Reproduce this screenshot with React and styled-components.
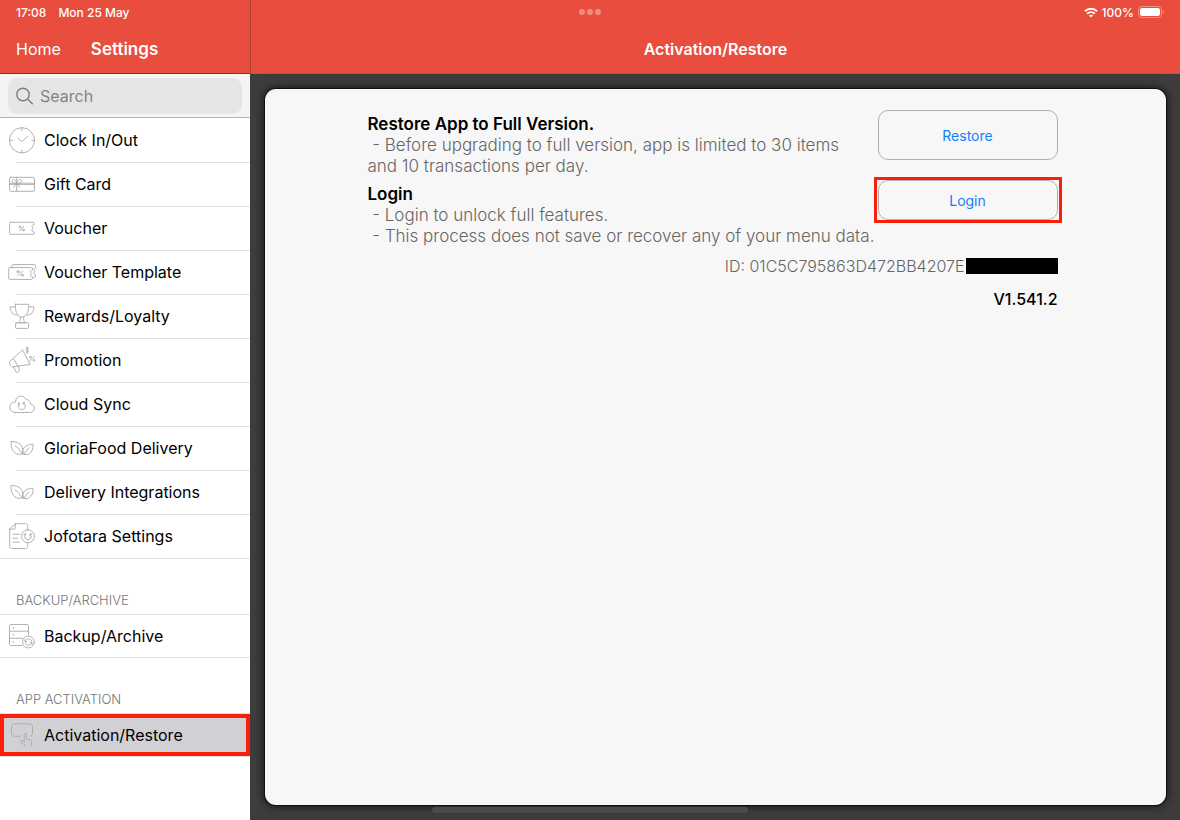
import React from "react";
import styled, { createGlobalStyle } from "styled-components";

const GlobalStyle = createGlobalStyle`
  * {
    box-sizing: border-box;
  }

  body {
    margin: 0;
    font-family: Inter, "Liberation Sans", sans-serif;
    font-size: 16px;
    color: #000;
    background: #3d3d3d;
  }

  button, input {
    font-family: inherit;
  }
`;

// Icons
const LineIcon = styled.svg`
  width: 28px;
  height: 28px;
  flex: none;
  fill: none;
  stroke: #a9a9a9;
  stroke-width: 0.9;
  stroke-linecap: round;
  stroke-linejoin: round;
`;

const Icon = ({ children }) => (
  <LineIcon viewBox="0 0 28 28" aria-hidden="true">
    {children}
  </LineIcon>
);

const ClockIcon = () => (
  <Icon>
    <circle cx="14" cy="14.3" r="12.6" />
    <path d="M14 1.7v3M14 24v3M1.4 14.3h3M23.6 14.3h3M9.8 12.2l4 3.4 6-5.3" />
  </Icon>
);

const GiftCardIcon = () => (
  <Icon>
    <rect x="1.5" y="7.3" width="25" height="14" rx="1.5" />
    <path d="M1.5 13.2h25M1.5 14.4h25M8.7 7.3v14M8.7 13.4c-1.2-4.8-4.9-5-4.6-2 .3 2 2.600 2.200 4.600 2zM8.700 13.400c1.200-4.800 4.900-5 4.600-2-.3 2-2.600 2.200-4.600 2zM8.500 13.800l-2.700 3.400M9 13.800l2.700 3.400" />
  </Icon>
);

const VoucherIcon = () => (
  <Icon>
    <path d="M2.8 8.300h22.600c.5 0 .8.3.8.8v1.400c-2 .5-2.700 1.600-2 2.600l1 1.200-1 1.300c-.7 1 0 2.100 2 2.600v1.300c0 .5-.3.8-.8.8H2.800c-.7 0-1.200-.4-1.200-1v-10c0-.6.5-1 1.200-1z" />
    <path d="M15.800 12.300l-4.200 4.400" />
    <circle cx="11.900" cy="13" r="0.900" />
    <circle cx="15.400" cy="16" r="0.900" />
  </Icon>
);

const VoucherTemplateIcon = () => (
  <Icon>
    <path d="M1.700 9.600h22c.5 0 .8.3.8.8v1.500c-2 .4-2.600 1.500-1.900 2.500l.7 1.200-.7 1.200c-.6 1 0 2 1.900 2.400v1.400c0 .5-.3.8-.8.8h-22c-.6 0-1-.4-1-1V10.600c0-.6.4-1 1-1z" />
    <path d="M4 9.500V7.600c0-.6.4-1 1-1h21.500c.6 0 1 .4 1 1v2.300c-1.400.4-2 1.400-1.500 2.300l.7 1.200-.7 1.200c-.5.9.1 1.900 1.500 2.300v1.300c0 .6-.4 1-1 1h-2" />
    <path d="M14.700 12.900l-5 5" />
    <circle cx="10" cy="13.700" r="1.100" />
    <circle cx="14.300" cy="17.200" r="1.100" />
  </Icon>
);

const TrophyIcon = () => (
  <Icon>
    <path d="M7.300 2.300h13.400c.2 6.200-1.200 11.700-6.700 13-5.500-1.300-6.900-6.800-6.700-13zM7.300 4.900H2c.2 4.800 2.600 8.600 7.300 8.200M20.700 4.900H26c-.2 4.800-2.600 8.600-7.300 8.200M12.300 15c.3 2.500 0 4.200-1.600 5.800h6.600c-1.600-1.600-1.900-3.300-1.600-5.800" />
    <rect x="7.500" y="20.800" width="13" height="5.600" rx="0.800" />
  </Icon>
);

const PromotionIcon = () => (
  <Icon>
    <path d="M14.700 4.200l7.500 14.300-12.300 1.600-4.300-7.500zM5.600 12.600l-3.200 2c-1.700 1.600-.8 5.600 2 6.500l5.500-1M5.800 20.900l1.800 4.500c.7 1.600 4.200.6 3.800-1.300l-1-4" />
    <path d="M20.600 2.500c-1-1.200-2.900-.6-2.700.6.2 1.300 2.700.8 2.800 2.200.1 1.200-2 1.600-2.900.4M19.200 1v6.500M26.400 10.300l-4.500 4.600" />
    <circle cx="22.300" cy="11.200" r="0.900" />
    <circle cx="25.800" cy="14.300" r="0.900" />
  </Icon>
);

const CloudIcon = () => (
  <Icon>
    <path d="M7 22.500h14.500c6.200 0 6.700-7.400.9-8.300 0-3.600-2.200-4.800-4.400-4.500C15.900 4 7.500 5.200 7.500 12 .3 11.700-.4 21.900 7 22.500z" />
    <path d="M11.200 13.500a3.600 3.600 0 1 0 4.200-.7M11.600 15v-1.900H9.900M15 14.500v-1.900h1.700" />
  </Icon>
);

const LeavesIcon = () => (
  <Icon>
    <path d="M14.300 19.700c2-6-1.300-12.300-11.300-12.200C2.600 15.700 6.300 21.200 13 20.300M7 11.700c3 2 5.500 4.700 7.300 8.600" />
    <path d="M16 20.400c-3-3.800-.8-9.800 9-10.200.5 7-3.200 11.800-9 10.200zM21 13.800c-2 1.700-3.700 4.200-5 6.600" />
  </Icon>
);

const DocumentIcon = () => (
  <Icon>
    <path d="M19.700 8.300V3.700c0-1.200-.7-2-2-2H7.300L1.700 7v17.500c0 1.200.7 2 2 2h14c1.300 0 2-.8 2-2v-3.300M7.300 1.700v4c0 1-.5 1.400-1.400 1.400H1.700M5 12.200h6.500M5 16.200h5M5 20.200h6.500" />
    <circle cx="20" cy="14.300" r="6.500" />
    <path d="M17.600 12.200a3.300 3.300 0 1 0 4.700 0M17.400 11.200v1.500h-1.500M22 14v-2h1.500" />
  </Icon>
);

const BackupIcon = () => (
  <Icon>
    <path d="M20.500 13V4c0-1-.5-1.500-1.500-1.500H3c-1 0-1.500.5-1.500 1.500v18c0 1 .5 1.500 1.500 1.500h11M1.500 9.200h19M1.500 16.300h13" />
    <path d="M5.300 5.900h.1M5.300 12.800h.1M5.300 20h.1" strokeWidth="1.5" />
    <circle cx="20.5" cy="20" r="5.9" />
    <path d="M17.200 19.400c.7-3 5-3.700 6.500-.7M17 17.700v2h1.800M23.800 20.600c-.7 3-5 3.700-6.500.7M24 22.300v-2h-1.800" />
  </Icon>
);

const ActivationIcon = () => (
  <Icon>
    <path d="M12.700 15.200H6.500c-1.800 0-3-1.200-3-3V5.800c0-1.800 1.200-3 3-3h15c1.800 0 3 1.200 3 3v6.400c0 1.500-.8 2.500-2 2.900" />
    <path d="M17.300 24.800l-4.500-4c-.7-1 .5-2 1.500-1.300l2 1.500v-7.600c0-1.500 2.200-1.500 2.200 0v4.700l3.500.7c1 .2 1.600.8 1.600 1.900v4.200" />
  </Icon>
);

const SearchIcon = styled.svg`
  width: 18px;
  height: 18px;
  flex: none;
  fill: none;
  stroke: #7d7d80;
  stroke-width: 1.4;
  stroke-linecap: round;
`;

// Menu data
const menuItems = [
  { label: "Clock In/Out", icon: ClockIcon },
  { label: "Gift Card", icon: GiftCardIcon },
  { label: "Voucher", icon: VoucherIcon },
  { label: "Voucher Template", icon: VoucherTemplateIcon },
  { label: "Rewards/Loyalty", icon: TrophyIcon },
  { label: "Promotion", icon: PromotionIcon },
  { label: "Cloud Sync", icon: CloudIcon },
  { label: "GloriaFood Delivery", icon: LeavesIcon },
  { label: "Delivery Integrations", icon: LeavesIcon },
  { label: "Jofotara Settings", icon: DocumentIcon },
];

// Styled Components
const Page = styled.div`
  position: relative;
  display: flex;
  min-height: 100vh;
`;

// The status bar and home indicator float over the app
const StatusBar = styled.div`
  position: absolute;
  top: 0;
  left: 0;
  right: 0;
  display: grid;
  grid-template-columns: 1fr auto 1fr;
  align-items: center;
  height: 24px;
  padding: 0 16px;
  font-size: 12px;
  font-weight: 500;
  color: #fff;
`;

const StatusGroup = styled.div`
  display: flex;
  align-items: center;
  justify-content: ${(props) => (props.$end ? "flex-end" : "flex-start")};
  gap: ${(props) => (props.$end ? "4px" : "12px")};
`;

const Dots = styled.div`
  display: flex;
  gap: 2px;

  span {
    width: 6px;
    height: 6px;
    border-radius: 50%;
    background: #f28c82;
  }
`;

const HomeIndicator = styled.div`
  position: absolute;
  left: 50%;
  bottom: 7px;
  width: 316px;
  height: 6px;
  border-radius: 3px;
  background: #4a4a4a;
  transform: translateX(-50%);
`;

const Sidebar = styled.aside`
  display: flex;
  flex-direction: column;
  width: 250px;
  flex: none;
  background: #fff;
`;

const NavBar = styled.header`
  display: flex;
  align-items: center;
  gap: 30px;
  height: 74px;
  padding: 24px 16px 0;
  color: #fff;
  background: #e84d3d;
  border-bottom: 1px solid ${(props) => (props.$center ? "#d4493b" : "#c8140f")};
  border-left: ${(props) => (props.$center ? "1px solid #b04034" : "none")};
  justify-content: ${(props) => (props.$center ? "center" : "flex-start")};
`;

const HomeLink = styled.a`
  color: #fff;
  text-decoration: none;
`;

const NavTitle = styled.h1`
  margin: 0;
  font-size: ${(props) => (props.$large ? "17px" : "16px")};
  font-weight: 600;
`;

const SearchArea = styled.div`
  padding: 4px 8px 3px;
  background: #f3f4f4;
  border-bottom: 1px solid #b4b4b4;
`;

const SearchField = styled.label`
  display: flex;
  align-items: center;
  gap: 6px;
  height: 36px;
  padding: 0 8px;
  border-radius: 10px;
  background: #e5e5e5;
`;

const SearchInput = styled.input`
  flex: 1;
  min-width: 0;
  padding: 0;
  border: none;
  outline: none;
  font-size: 16px;
  background: transparent;

  &::placeholder {
    color: #838386;
    opacity: 1;
  }
`;

const MenuList = styled.ul`
  margin: 0;
  padding: 0;
  list-style: none;
  border-top: ${(props) => (props.$topLine ? "1px solid #e2e2e2" : "none")};
  border-bottom: 1px solid #e2e2e2;
`;

const MenuItem = styled.li`
  position: relative;

  & + &::before {
    content: "";
    position: absolute;
    top: 0;
    left: 16px;
    right: 0;
    height: 1px;
    background: #e0e0e0;
  }
`;

const MenuButton = styled.button`
  display: flex;
  align-items: center;
  gap: 8px;
  width: 100%;
  height: ${(props) => (props.$compact ? "42px" : "44px")};
  padding: 0 8px;
  border: none;
  font-size: 16px;
  text-align: left;
  color: #000;
  background: ${(props) => (props.$active ? "#d1d0d5" : "transparent")};
  outline: ${(props) => (props.$active ? "4px solid #fb1f0a" : "none")};
  outline-offset: -4px;
`;

const SectionTitle = styled.h2`
  margin: 0;
  padding: 33px 16px 6px;
  font-size: 13px;
  line-height: 16px;
  font-weight: 300;
  color: #757575;
`;

const Main = styled.main`
  display: flex;
  flex-direction: column;
  flex: 1;
  min-width: 0;
  background: #3d3d3d;
`;

const Card = styled.section`
  flex: 1;
  display: flex;
  justify-content: center;
  align-items: flex-start;
  margin: 15px 14px 15px 15px;
  padding: 21px 22px 21px 16px;
  border-radius: 11px;
  background: #f7f7f7;
  box-shadow: 0 0 0 1px #111, 0 0 8px 1px #111;
`;

const Content = styled.div`
  flex: 0 1 690px;
  display: grid;
  grid-template-columns: minmax(0, 1fr) 180px;
`;

const Description = styled.div`
  padding-top: 4px;
  font-size: 17px;
  line-height: 21px;
`;

const Subheading = styled.h3`
  margin: ${(props) => (props.$spaced ? "7px 0 0" : "0")};
  font-size: 17px;
  font-weight: 600;
`;

const Text = styled.p`
  margin: 0;
  padding-right: ${(props) => (props.$oneLine ? "0" : "20px")};
  font-weight: 300;
  white-space: ${(props) => (props.$oneLine ? "pre" : "pre-wrap")};
  color: #666;
`;

const Actions = styled.div`
  display: flex;
  flex-direction: column;
  gap: 20px;
`;

const ActionButton = styled.button`
  height: ${(props) => (props.$highlight ? "40px" : "50px")};
  border: 1px solid #b0b0b0;
  border-radius: 10px;
  font-size: 14px;
  color: #157efb;
  background: transparent;
`;

const Highlight = styled.div`
  display: grid;
  margin: -3px -4px;
  padding: 0 1px;
  border: 3px solid #fb1f0a;
`;

const IdLine = styled.div`
  grid-column: 1 / -1;
  display: flex;
  justify-content: flex-end;
  align-items: center;
  gap: 1px;
  margin-top: 9px;
  line-height: 20px;
  font-size: 16px;
  font-weight: 300;
  color: #666;
`;

const Redacted = styled.span`
  width: 92px;
  height: 16px;
  background: #000;
`;

const Version = styled.div`
  grid-column: 1 / -1;
  margin-top: 13px;
  line-height: 20px;
  font-size: 16px;
  font-weight: 500;
  text-align: right;
`;

const App = () => {
  return (
    <>
      <GlobalStyle />
      <Page>
        <Sidebar>
          <NavBar>
            <HomeLink href="#home">Home</HomeLink>
            <NavTitle $large>Settings</NavTitle>
          </NavBar>
          <SearchArea>
            <SearchField>
              <SearchIcon viewBox="0 0 18 18" aria-hidden="true">
                <circle cx="7" cy="7.5" r="6.2" />
                <path d="M11.600 12.100l4.700 4.600" />
              </SearchIcon>
              <SearchInput type="search" placeholder="Search" aria-label="Search" />
            </SearchField>
          </SearchArea>
          <MenuList>
            {menuItems.map(({ label, icon: ItemIcon }) => (
              <MenuItem key={label}>
                <MenuButton type="button">
                  <ItemIcon /> {label}
                </MenuButton>
              </MenuItem>
            ))}
          </MenuList>
          <SectionTitle>BACKUP/ARCHIVE</SectionTitle>
          <MenuList $topLine>
            <MenuItem>
              <MenuButton type="button" $compact>
                <BackupIcon /> Backup/Archive
              </MenuButton>
            </MenuItem>
          </MenuList>
          <SectionTitle>APP ACTIVATION</SectionTitle>
          <MenuList $topLine>
            <MenuItem>
              <MenuButton type="button" $compact $active>
                <ActivationIcon /> Activation/Restore
              </MenuButton>
            </MenuItem>
          </MenuList>
        </Sidebar>

        <Main>
          <NavBar $center>
            <NavTitle>Activation/Restore</NavTitle>
          </NavBar>
          <Card>
            <Content>
              <Description>
                <Subheading>Restore App to Full Version.</Subheading>
                <Text>
                  {" - Before upgrading to full version, app is limited to 30 items and 10 transactions per day."}
                </Text>
                <Subheading $spaced>Login</Subheading>
                <Text>{" - Login to unlock full features."}</Text>
                <Text $oneLine>
                  {" - This process does not save or recover any of your menu data."}
                </Text>
              </Description>
              <Actions>
                <ActionButton type="button">Restore</ActionButton>
                <Highlight>
                  <ActionButton type="button" $highlight>
                    Login
                  </ActionButton>
                </Highlight>
              </Actions>
              <IdLine>
                ID: 01C5C795863D472BB4207E
                <Redacted />
              </IdLine>
              <Version>V1.541.2</Version>
            </Content>
          </Card>
        </Main>

        <StatusBar>
          <StatusGroup>
            <span>17:08</span>
            <span>Mon 25 May</span>
          </StatusGroup>
          <Dots>
            <span />
            <span />
            <span />
          </Dots>
          <StatusGroup $end>
            <svg width="14" height="11" viewBox="0 0 14 11" fill="none" stroke="#fff" strokeWidth="2" aria-hidden="true">
              <path d="M.9 4.200c3.500-3.400 8.700-3.400 12.200 0M3.200 6.700c2.200-2.100 5.400-2.100 7.600 0" />
              <path d="M7 10.600L4.900 8.500c1.200-1.100 3-1.100 4.200 0z" fill="#fff" stroke="none" />
            </svg>
            <span>100%</span>
            <svg width="26" height="12" viewBox="0 0 26 12" aria-hidden="true">
              <rect x="0.5" y="0.5" width="23" height="11" rx="3.5" fill="none" stroke="#f19287" />
              <rect x="2" y="2" width="20" height="8" rx="2.2" fill="#fff" />
              <path d="M24.700 4v4c1.500-.6 1.500-3.400 0-4z" fill="#f19287" />
            </svg>
          </StatusGroup>
        </StatusBar>
        <HomeIndicator />
      </Page>
    </>
  );
};

export default App;
